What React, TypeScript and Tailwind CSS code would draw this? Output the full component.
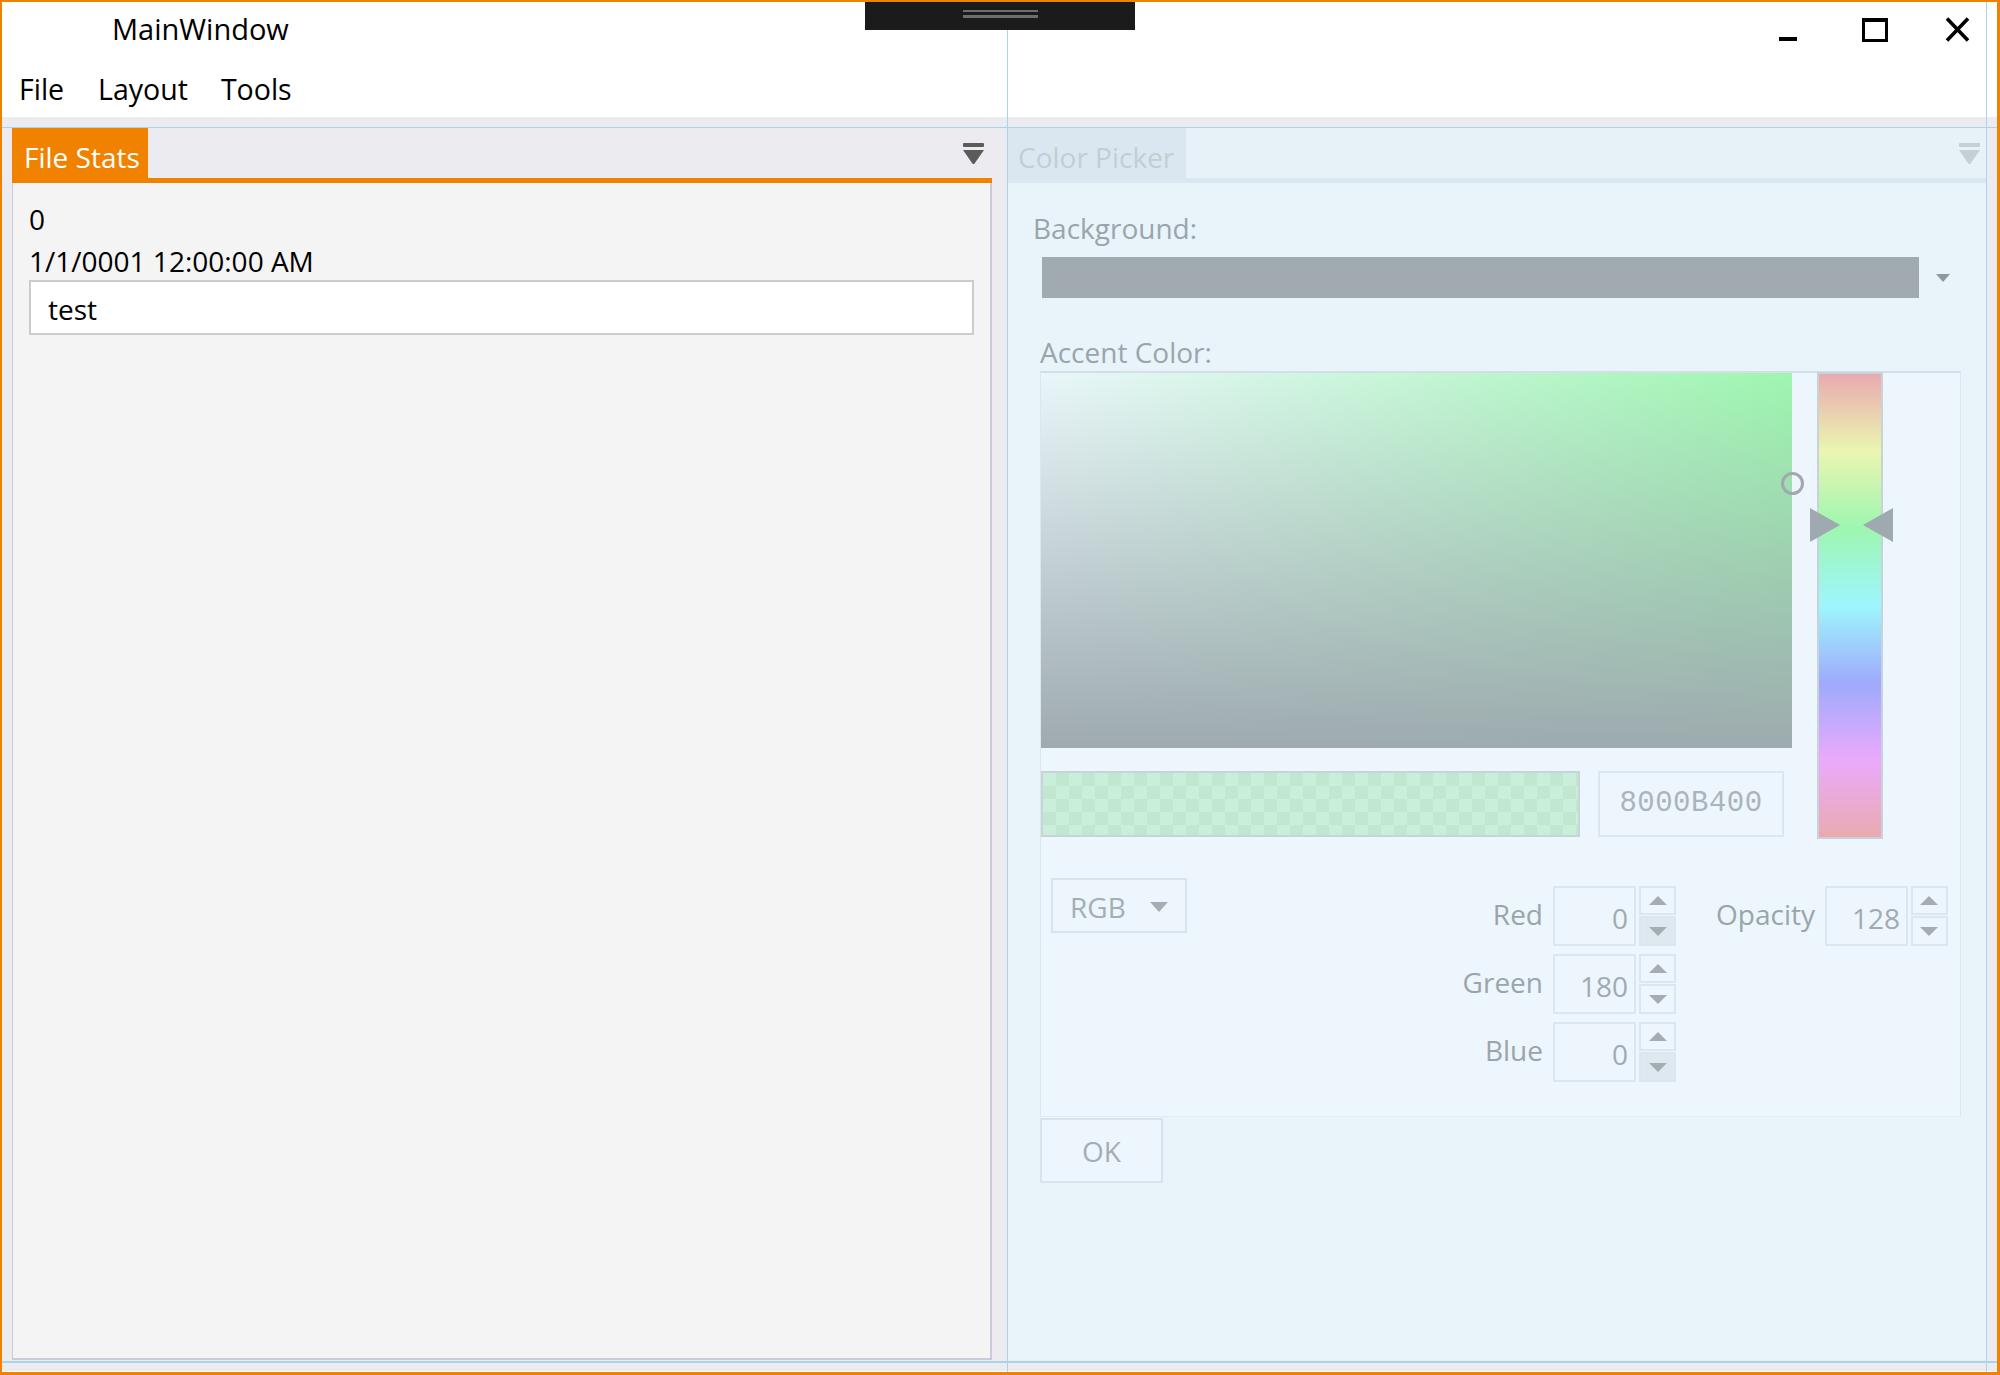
import React from "react";

function PaneMenu({ color }: { color: string }) {
  return (
    <svg width="21" height="21" viewBox="0 0 21 21">
      <rect x="0" y="0" width="21" height="4" rx="1" fill={color} />
      <path d="M0 7 H21 L11.6 20.4 Q10.5 21.5 9.4 20.4 Z" fill={color} />
    </svg>
  );
}

function UpArrow() {
  return (
    <svg width="18" height="9" viewBox="0 0 18 9">
      <path d="M9 0 L18 9 H0 Z" fill="#a3adb3" />
    </svg>
  );
}

function DownArrow() {
  return (
    <svg width="18" height="9" viewBox="0 0 18 9">
      <path d="M0 0 H18 L9 9 Z" fill="#a3adb3" />
    </svg>
  );
}

function Spin({ value, pressed }: { value: string; pressed?: boolean }) {
  return (
    <div className="flex h-[60px]">
      <div className="w-[83px] h-[60px] border-2 border-[#dbe6ee] bg-[#edf6fc] flex items-center justify-end pr-[6px] pt-[4px] leading-[38px] text-[#a0aab0]">
        {value}
      </div>
      <div className="ml-[3px] w-[37px] flex flex-col">
        <div className="h-[29px] border-2 border-[#dbe6ee] bg-[#edf6fc] flex items-center justify-center">
          <UpArrow />
        </div>
        <div
          className={
            pressed
              ? "mt-[1px] h-[30px] border-2 border-[#dbe6ee] bg-[#dde8ef] flex items-center justify-center"
              : "mt-[1px] h-[30px] border-2 border-[#dbe6ee] bg-[#edf6fc] flex items-center justify-center"
          }
        >
          <DownArrow />
        </div>
      </div>
    </div>
  );
}

function SpinRow({ label, value, pressed }: { label: string; value: string; pressed?: boolean }) {
  return (
    <div className="flex items-center">
      <div className="w-[120px] text-right leading-[38px] pb-[4px] text-[#9aa5ab]">{label}</div>
      <div className="ml-[10px]">
        <Spin value={value} pressed={pressed} />
      </div>
    </div>
  );
}

export default function App() {
  return (
    <div className="relative w-[2000px] h-[1375px] overflow-hidden bg-white border-t-2 border-l-2 border-r-[3px] border-b-[3px] border-[#f08200] font-['Open_Sans','Noto_Sans',sans-serif] text-[28px] text-black flex flex-col">
      {/* Title bar */}
      <div className="h-[56px] flex items-start bg-white">
        <div className="ml-[110px] mt-[8px] leading-[38px] text-[29px]">MainWindow</div>
        <div className="flex-1" />
        <div className="flex items-start pt-[15px] mr-[27px]">
          <svg width="18" height="26" viewBox="0 0 18 26">
            <rect x="0" y="20" width="18" height="4" fill="#000" />
          </svg>
          <svg className="ml-[65px]" width="26" height="26" viewBox="0 0 26 26">
            <rect x="1.5" y="2.5" width="23" height="21" fill="none" stroke="#000" strokeWidth="3" />
            <rect x="0" y="1" width="26" height="4" fill="#000" />
          </svg>
          <svg className="ml-[57px]" width="25" height="26" viewBox="0 0 25 26">
            <path d="M2 1.5 L23 23.5 M23 1.5 L2 23.5" stroke="#000" strokeWidth="3.6" />
          </svg>
        </div>
      </div>

      {/* Menu bar */}
      <div className="h-[59px] flex items-start bg-white pt-[12px] text-[28.5px]">
        <div className="px-[17px] leading-[38px]">File</div>
        <div className="px-[17px] leading-[38px]">Layout</div>
        <div className="px-[16px] leading-[38px]">Tools</div>
      </div>

      {/* Dock area */}
      <div className="h-[1255px] bg-[#ecebf0] flex pl-[10px] pr-[11px] pt-[11px] pb-[11px] gap-[16px] border-b border-white">
        {/* Left pane */}
        <div className="w-[980px] flex flex-col">
          <div className="h-[50px] flex justify-between">
            <div className="w-[136px] bg-[#f08200] text-white pl-[12px] pt-[9px] leading-[40px]">File Stats</div>
            <div className="mt-[15px] mr-[8px]">
              <PaneMenu color="#5b5b5b" />
            </div>
          </div>
          <div className="h-[5px] bg-[#f08200]" />
          <div className="flex-1 bg-[#f4f4f4] border-l border-r-2 border-b-2 border-[#cdc9d8] pl-[16px] pr-[16px] pt-[16px]">
            <div className="leading-[40px] pb-[2px]">0</div>
            <div className="leading-[40px]">1/1/0001 12:00:00 AM</div>
            <div className="-mt-[1px] h-[55px] border-2 border-[#cccccc] bg-white pl-[17px] pt-[2px] flex items-center leading-[38px]">
              test
            </div>
          </div>
        </div>

        {/* Right pane */}
        <div className="w-[978px] flex flex-col">
          <div className="h-[50px] bg-[#e6f1f8] flex justify-between">
            <div className="w-[178px] bg-[#dae7f1] pl-[10px] pt-[9px] leading-[40px] text-[#c5cdd2]">Color Picker</div>
            <div className="mt-[15px] mr-[6px]">
              <PaneMenu color="#c5cfd5" />
            </div>
          </div>
          <div className="h-[5px] bg-[#dae7f1]" />
          <div className="flex-1 bg-[#e9f4fa] pl-[25px] pt-[25px] flex flex-col items-start">
            <div className="leading-[40px] text-[#9aa5ab]">Background:</div>
            <div className="mt-[9px] ml-[9px] flex items-center">
              <div className="w-[877px] h-[41px] bg-[#a0aab0]" />
              <svg className="ml-[17px]" width="14" height="8" viewBox="0 0 14 8">
                <path d="M0 0 H14 L7 8 Z" fill="#8e989e" />
              </svg>
            </div>
            <div className="mt-[34px] ml-[7px] leading-[40px] text-[#9aa5ab]">Accent Color:</div>

            {/* Color picker panel */}
            <div className="-mt-[1px] ml-[7px] w-[921px] h-[746px] border-t-2 border-x border-b border-t-[#d3dfe7] border-x-[#dbe7ee] border-b-[#e1ecf3] bg-[#edf6fc] flex flex-col">
              <div className="flex items-start">
                <div className="w-[751px] flex flex-col">
                  <div className="relative w-[751px] h-[375px] bg-[linear-gradient(to_right,#eaf6fa,#9ef6b0)]">
                    <div className="absolute inset-0 bg-[linear-gradient(to_bottom,rgba(158,170,176,0),#9eaab0)]" />
                    <div className="absolute left-[740px] top-[99px] w-[23px] h-[23px] rounded-full border-[3px] border-[#a0a9b0]" />
                  </div>
                  <div className="mt-[23px] flex">
                    <div className="w-[539px] h-[66px] border-2 border-[#c8d3da] bg-[conic-gradient(#c1e7d1_25%,#c9eed9_0_50%,#c1e7d1_0_75%,#c9eed9_0)] bg-[length:26px_26px]" />
                    <div className="ml-[18px] w-[186px] h-[66px] border-2 border-[#dbe6ee] bg-[#edf6fc] flex items-center justify-center font-['Liberation_Mono',monospace] text-[29px] tracking-[0.5px] text-[#aab4ba]">
                      8000B400
                    </div>
                  </div>
                </div>
                <div className="relative ml-[25px] -mt-[1px] w-[66px] h-[467px] border-2 border-[#c8d2da] bg-[linear-gradient(to_bottom,#eaaab0,#eaf6b0_16.67%,#9ef6b0_33.33%,#9ef6fc_50%,#9eaafc_66.67%,#eaaafc_83.33%,#eaaab0)]">
                  <svg className="absolute left-[-9px] top-[134px]" width="30" height="34" viewBox="0 0 30 34">
                    <path d="M0 0 L30 17 L0 34 Z" fill="#9fa9b0" />
                  </svg>
                  <svg className="absolute left-[44px] top-[134px]" width="30" height="34" viewBox="0 0 30 34">
                    <path d="M30 0 L0 17 L30 34 Z" fill="#9fa9b0" />
                  </svg>
                </div>
              </div>

              <div className="flex items-start">
                <div className="ml-[10px] mt-[39px] w-[136px] h-[55px] border-2 border-[#d8e4ec] bg-[#edf6fc] flex items-center pl-[17px] pt-[2px] text-[#a4aeb4]">
                  <span className="leading-[38px]">RGB</span>
                  <svg className="ml-[24px]" width="18" height="10" viewBox="0 0 18 10">
                    <path d="M0 0 H18 L9 10 Z" fill="#a4aeb4" />
                  </svg>
                </div>
                <div className="ml-[236px] mt-[47px] flex flex-col gap-[8px]">
                  <SpinRow label="Red" value="0" pressed />
                  <SpinRow label="Green" value="180" />
                  <SpinRow label="Blue" value="0" pressed />
                </div>
                <div className="ml-[40px] mt-[47px] flex items-center">
                  <div className="leading-[38px] pb-[4px] text-[#9aa5ab]">Opacity</div>
                  <div className="ml-[10px]">
                    <Spin value="128" />
                  </div>
                </div>
              </div>
            </div>

            <div className="mt-[1px] ml-[7px] w-[123px] h-[65px] border-2 border-[#d8e4ec] bg-[#edf6fc] flex items-center justify-center text-[#a4aeb4] leading-[38px]">
              OK
            </div>
          </div>
        </div>
      </div>

      {/* Design-time guide lines */}
      <div className="absolute left-[1005px] top-[26px] bottom-[-3px] w-px bg-[#a8d5ec]" />
      <div className="absolute left-[1984px] top-[-2px] bottom-[-3px] w-px bg-[#a8d5ec]" />
      <div className="absolute left-[-2px] right-[-3px] top-[125px] h-px bg-[#a8d5ec]" />
      <div className="absolute left-[-2px] right-[-3px] top-[1359px] h-[2px] bg-[#a8d5ec]" />

      {/* Drag handle */}
      <div className="absolute left-[863px] top-[-2px] w-[270px] h-[30px] bg-[#1b1b1b] flex flex-col items-center pt-[10px] gap-[3px]">
        <div className="w-[75px] h-[2px] bg-[#6e6e6e]" />
        <div className="w-[75px] h-[3px] bg-[#6e6e6e]" />
      </div>
    </div>
  );
}
